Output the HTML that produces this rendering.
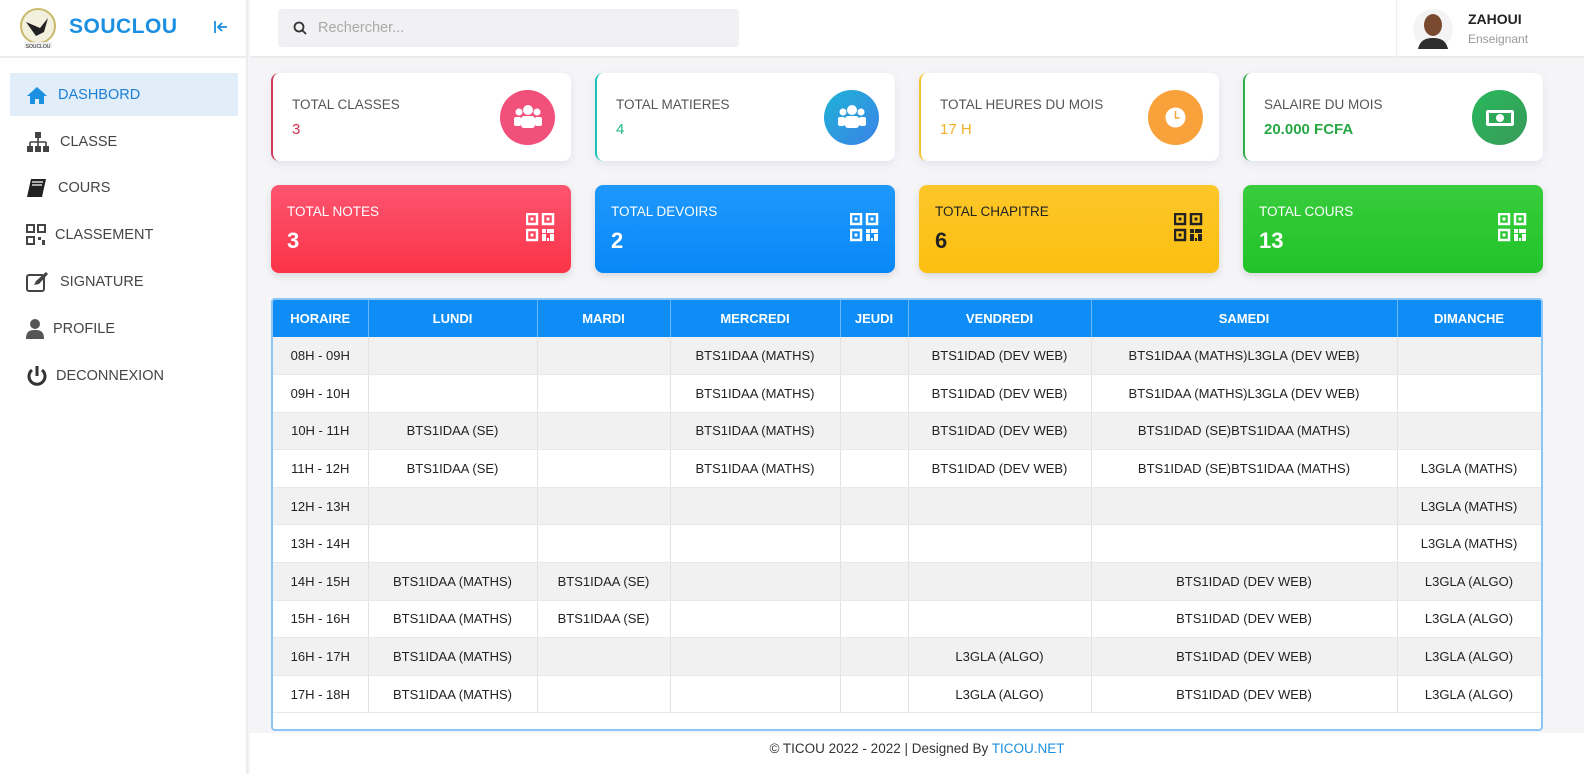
<!DOCTYPE html>
<html><head><meta charset="utf-8">
<style>
*{box-sizing:border-box;margin:0;padding:0}
body{width:1584px;height:774px;overflow:hidden;background:#f5f5f7;font-family:"Liberation Sans",Arial,sans-serif;position:relative;color:#333}
.side{position:absolute;left:0;top:0;width:248px;height:774px;background:#fff;border-right:2px solid #ececec}
.brand{height:58px;border-bottom:2px solid #ececec;position:relative}
.brand .t{position:absolute;left:69px;top:15px;font-size:21px;font-weight:bold;color:#1b8fe0;letter-spacing:.5px}
.nav{position:absolute;left:10px;width:228px;height:43px;font-size:14.5px;color:#444;display:flex;align-items:center}
.nav svg{position:absolute;left:16px}
.nav span{position:absolute}
.top{position:absolute;left:250px;top:0;right:0;height:58px;background:#fff;border-bottom:2px solid #ececec}
.search{position:absolute;left:278px;top:9px;width:461px;height:38px;background:#f1f1f3;border-radius:3px}
.search span{position:absolute;left:40px;top:11px;font-size:14.5px;color:#aaa}
.card{position:absolute;width:300px;height:88px;background:#fff;border-radius:8px;box-shadow:0 3px 8px rgba(120,120,200,.15)}
.card .l{position:absolute;left:19px;top:24px;font-size:13.5px;color:#555}
.card .v{position:absolute;left:19px;top:48px;font-size:15px}
.card .c{position:absolute;right:16px;top:17px;width:55px;height:55px;border-radius:50%}
.card2{position:absolute;width:300px;height:88px;border-radius:8px;color:#fff;box-shadow:0 3px 8px rgba(0,0,0,.12)}
.card2 .l{position:absolute;left:16px;top:19px;font-size:13.5px}
.card2 .v{position:absolute;left:16px;top:43px;font-size:22px;font-weight:bold}
.card2 svg{position:absolute;right:16px;top:28px}
.tw{position:absolute;left:271px;top:298px;width:1272px;height:433px;background:#fff;border:2px solid #8cc6f7;border-radius:4px;overflow:hidden}
table{border-collapse:collapse;width:1268px;table-layout:fixed;font-size:13px;color:#222}
th{background:#0d8df5;color:#fff;font-weight:bold;height:37px;border-right:1px solid #6bb6f8;font-size:13px}
td{height:37.6px;text-align:center;border-right:1px solid #e2e2e2;border-bottom:1px solid #e8e8e8}
tr:nth-child(odd) td{background:#f1f1f1}
tbody tr:nth-child(even) td{background:#fff}
tbody tr:nth-child(odd) td{background:#f1f1f1}
.foot{position:absolute;left:250px;right:0;top:733px;height:41px;background:#fff;text-align:center;font-size:13.5px;color:#333;padding-top:8px}
</style></head><body>
<div class="side">
 <div class="brand">
  <svg style="position:absolute;left:18px;top:8px" width="40" height="42" viewBox="0 0 40 42"><circle cx="20" cy="18" r="17" fill="#f3f0de" stroke="#c9b96a" stroke-width="2"/><path d="M8 14 L22 20 L30 10 L26 24 L18 28 Z" fill="#222"/><rect x="6" y="34" width="28" height="6" fill="#eee"/><text x="20" y="40" font-size="5" text-anchor="middle" fill="#222" font-family="Liberation Sans">SOUCLOU</text></svg>
  <div class="t">SOUCLOU</div>
  <svg style="position:absolute;left:213px;top:20px" width="16" height="14" viewBox="0 0 16 14"><path d="M2 1v12M14 7H5M9 3L5 7l4 4" stroke="#1b8fe0" stroke-width="1.8" fill="none"/></svg>
 </div>
 <div class="nav" style="top:73px;background:#e1edf9;color:#1b7fd6">
  <svg width="22" height="20" viewBox="0 0 22 20"><path d="M11 2L1 11h3v8h5v-5h4v5h5v-8h3z" fill="#1b8fe0"/></svg><span style="left:48px">DASHBORD</span></div>
 <div class="nav" style="top:120px"><svg width="24" height="22" viewBox="0 0 24 22"><rect x="9" y="1" width="6" height="6" fill="#444"/><path d="M12 7v4M4 11h16M4 11v4M12 11v4M20 11v4" stroke="#444" stroke-width="1.6"/><rect x="1" y="15" width="6" height="6" fill="#444"/><rect x="9" y="15" width="6" height="6" fill="#444"/><rect x="17" y="15" width="6" height="6" fill="#444"/></svg><span style="left:50px">CLASSE</span></div>
 <div class="nav" style="top:166px"><svg width="22" height="22" viewBox="0 0 22 22"><path d="M5 2h15l-4 18H1z" fill="#222"/><path d="M6 5h11M6 8h10" stroke="#fff" stroke-width="1.2"/></svg><span style="left:48px">COURS</span></div>
 <div class="nav" style="top:213px"><svg width="20" height="22" viewBox="0 0 20 22"><g fill="none" stroke="#444" stroke-width="2"><rect x="1" y="1" width="7" height="7"/><rect x="12" y="1" width="7" height="7"/><rect x="1" y="13" width="7" height="7"/></g><rect x="12" y="13" width="3" height="3" fill="#444"/><rect x="16" y="16" width="3" height="5" fill="#444"/></svg><span style="left:45px">CLASSEMENT</span></div>
 <div class="nav" style="top:260px"><svg width="24" height="22" viewBox="0 0 24 22"><rect x="1" y="4" width="17" height="16" rx="2" fill="none" stroke="#444" stroke-width="2"/><path d="M8 14l2-4 10-9 2 2-9 10z" fill="#444"/></svg><span style="left:50px">SIGNATURE</span></div>
 <div class="nav" style="top:307px"><svg width="18" height="22" viewBox="0 0 18 22"><circle cx="9" cy="6" r="5" fill="#555"/><path d="M0 21c0-7 3-9 9-9s9 2 9 9z" fill="#555"/></svg><span style="left:43px">PROFILE</span></div>
 <div class="nav" style="top:354px"><svg width="22" height="22" viewBox="0 0 22 22"><path d="M6 5a8 8 0 1 0 10 0" fill="none" stroke="#333" stroke-width="3"/><path d="M11 1v10" stroke="#333" stroke-width="3"/></svg><span style="left:46px">DECONNEXION</span></div>
</div>
<div class="top"></div>
<div class="search"><svg style="position:absolute;left:15px;top:12px" width="14" height="14" viewBox="0 0 14 14"><circle cx="6" cy="6" r="4.5" fill="none" stroke="#333" stroke-width="1.8"/><path d="M9.5 9.5L13 13" stroke="#333" stroke-width="1.8"/></svg><span>Rechercher...</span></div>
<div style="position:absolute;left:1396px;top:0;width:1px;height:58px;background:#eee"></div>
<svg style="position:absolute;left:1412px;top:7px" width="42" height="44" viewBox="0 0 42 44"><circle cx="21" cy="22" r="20" fill="#f4f4f4"/><ellipse cx="21" cy="18" rx="9" ry="11" fill="#7a4a30"/><path d="M6 42c2-9 8-11 15-11s13 2 15 11z" fill="#2d2d2d"/></svg>
<div style="position:absolute;left:1468px;top:11px;font-size:14px;font-weight:bold;color:#222">ZAHOUI</div>
<div style="position:absolute;left:1468px;top:32px;font-size:12px;color:#999">Enseignant</div>

<div class="card" style="left:271px;top:73px;border-left:2px solid #d23a5a"><div class="l">TOTAL CLASSES</div><div class="v" style="color:#d2304e">3</div><div class="c" style="background:#f0507a"><svg style="margin:13px 0 0 13px" width="30" height="28" viewBox="0 0 30 28"><g fill="#fff"><circle cx="15" cy="7" r="5"/><circle cx="6" cy="9" r="3.5"/><circle cx="24" cy="9" r="3.5"/><rect x="8" y="13" width="14" height="12" rx="3"/><rect x="1" y="14" width="7" height="9" rx="2"/><rect x="22" y="14" width="7" height="9" rx="2"/></g></svg></div></div>
<div class="card" style="left:595px;top:73px;border-left:2px solid #1ec4b8"><div class="l">TOTAL MATIERES</div><div class="v" style="color:#1eb98a">4</div><div class="c" style="background:linear-gradient(135deg,#1fb3d6,#3b82e8)"><svg style="margin:13px 0 0 13px" width="30" height="28" viewBox="0 0 30 28"><g fill="#fff"><circle cx="15" cy="7" r="5"/><circle cx="6" cy="9" r="3.5"/><circle cx="24" cy="9" r="3.5"/><rect x="8" y="13" width="14" height="12" rx="3"/><rect x="1" y="14" width="7" height="9" rx="2"/><rect x="22" y="14" width="7" height="9" rx="2"/></g></svg></div></div>
<div class="card" style="left:919px;top:73px;border-left:2px solid #f4c430"><div class="l">TOTAL HEURES DU MOIS</div><div class="v" style="color:#f2b02a">17 H</div><div class="c" style="background:#f9a23c"><svg style="margin:16px 0 0 16px" width="23" height="23" viewBox="0 0 23 23"><circle cx="11.5" cy="11.5" r="10" fill="#fff"/><path d="M11.5 5v7h4" stroke="#f9a23c" stroke-width="1.5" fill="none"/></svg></div></div>
<div class="card" style="left:1243px;top:73px;border-left:2px solid #2fae4a"><div class="l">SALAIRE DU MOIS</div><div class="v" style="color:#28a745;font-weight:bold">20.000 FCFA</div><div class="c" style="background:linear-gradient(135deg,#27b85b,#3a9a5a)"><svg style="margin:18px 0 0 13px" width="30" height="20" viewBox="0 0 30 20"><rect x="1" y="2" width="28" height="16" rx="2" fill="#fff"/><rect x="4" y="5" width="22" height="10" fill="#2fa85a"/><circle cx="15" cy="10" r="4" fill="#fff"/></svg></div></div>

<svg width="0" height="0" style="position:absolute"><defs><g id="qr"><rect x="1" y="1" width="10" height="10" fill="none" stroke="currentColor" stroke-width="2.5"/><rect x="17" y="1" width="10" height="10" fill="none" stroke="currentColor" stroke-width="2.5"/><rect x="1" y="17" width="10" height="10" fill="none" stroke="currentColor" stroke-width="2.5"/><rect x="4.5" y="4.5" width="3" height="3" fill="currentColor"/><rect x="20.5" y="4.5" width="3" height="3" fill="currentColor"/><rect x="4.5" y="20.5" width="3" height="3" fill="currentColor"/><rect x="16" y="16" width="4" height="4" fill="currentColor"/><rect x="21" y="16" width="7" height="4" fill="currentColor"/><rect x="16" y="21" width="4" height="7" fill="currentColor"/><rect x="24" y="21" width="4" height="7" fill="currentColor"/><rect x="21" y="25" width="2" height="3" fill="currentColor"/></g></defs></svg>
<div class="card2" style="left:271px;top:185px;background:linear-gradient(#fd5470,#fb3448)"><div class="l">TOTAL NOTES</div><div class="v">3</div><svg width="29" height="29" style="color:#fff"><use href="#qr"/></svg></div>
<div class="card2" style="left:595px;top:185px;background:linear-gradient(#1e98fb,#0888f8)"><div class="l">TOTAL DEVOIRS</div><div class="v">2</div><svg width="29" height="29" style="color:#fff"><use href="#qr"/></svg></div>
<div class="card2" style="left:919px;top:185px;background:linear-gradient(#fdc72a,#fcbf10);color:#222"><div class="l">TOTAL CHAPITRE</div><div class="v">6</div><svg width="29" height="29" style="color:#222"><use href="#qr"/></svg></div>
<div class="card2" style="left:1243px;top:185px;background:linear-gradient(#38cc3c,#22c32a)"><div class="l">TOTAL COURS</div><div class="v">13</div><svg width="29" height="29" style="color:#fff"><use href="#qr"/></svg></div>

<div class="tw"><table>
<colgroup><col style="width:95px"><col style="width:169px"><col style="width:133px"><col style="width:170px"><col style="width:68px"><col style="width:183px"><col style="width:306px"><col style="width:144px"></colgroup>
<thead><tr><th>HORAIRE</th><th>LUNDI</th><th>MARDI</th><th>MERCREDI</th><th>JEUDI</th><th>VENDREDI</th><th>SAMEDI</th><th>DIMANCHE</th></tr></thead>
<tbody>
<tr><td>08H - 09H</td><td></td><td></td><td>BTS1IDAA (MATHS)</td><td></td><td>BTS1IDAD (DEV WEB)</td><td>BTS1IDAA (MATHS)L3GLA (DEV WEB)</td><td></td></tr>
<tr><td>09H - 10H</td><td></td><td></td><td>BTS1IDAA (MATHS)</td><td></td><td>BTS1IDAD (DEV WEB)</td><td>BTS1IDAA (MATHS)L3GLA (DEV WEB)</td><td></td></tr>
<tr><td>10H - 11H</td><td>BTS1IDAA (SE)</td><td></td><td>BTS1IDAA (MATHS)</td><td></td><td>BTS1IDAD (DEV WEB)</td><td>BTS1IDAD (SE)BTS1IDAA (MATHS)</td><td></td></tr>
<tr><td>11H - 12H</td><td>BTS1IDAA (SE)</td><td></td><td>BTS1IDAA (MATHS)</td><td></td><td>BTS1IDAD (DEV WEB)</td><td>BTS1IDAD (SE)BTS1IDAA (MATHS)</td><td>L3GLA (MATHS)</td></tr>
<tr><td>12H - 13H</td><td></td><td></td><td></td><td></td><td></td><td></td><td>L3GLA (MATHS)</td></tr>
<tr><td>13H - 14H</td><td></td><td></td><td></td><td></td><td></td><td></td><td>L3GLA (MATHS)</td></tr>
<tr><td>14H - 15H</td><td>BTS1IDAA (MATHS)</td><td>BTS1IDAA (SE)</td><td></td><td></td><td></td><td>BTS1IDAD (DEV WEB)</td><td>L3GLA (ALGO)</td></tr>
<tr><td>15H - 16H</td><td>BTS1IDAA (MATHS)</td><td>BTS1IDAA (SE)</td><td></td><td></td><td></td><td>BTS1IDAD (DEV WEB)</td><td>L3GLA (ALGO)</td></tr>
<tr><td>16H - 17H</td><td>BTS1IDAA (MATHS)</td><td></td><td></td><td></td><td>L3GLA (ALGO)</td><td>BTS1IDAD (DEV WEB)</td><td>L3GLA (ALGO)</td></tr>
<tr><td>17H - 18H</td><td>BTS1IDAA (MATHS)</td><td></td><td></td><td></td><td>L3GLA (ALGO)</td><td>BTS1IDAD (DEV WEB)</td><td>L3GLA (ALGO)</td></tr>
</tbody></table></div>
<div class="foot">© TICOU 2022 - 2022 | Designed By <span style="color:#1b8fe0">TICOU.NET</span></div>
</body></html>
